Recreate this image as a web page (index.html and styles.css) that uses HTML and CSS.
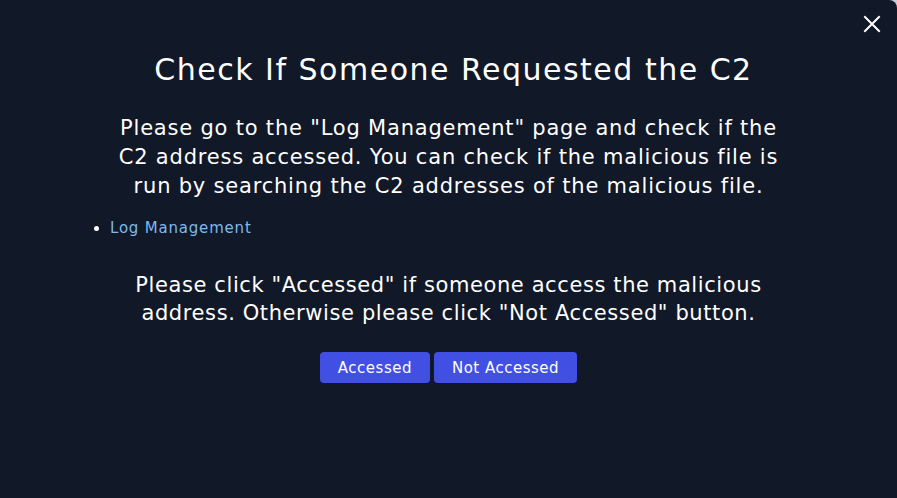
FILE: index.html
```html
<!DOCTYPE html>
<html>
<head>
<meta charset="utf-8">
<link rel="stylesheet" href="styles.css">
</head>
<body>
<div class="modal">
  <button class="close" aria-label="Close">
    <svg width="18" height="18" viewBox="0 0 18 18"><path d="M2 2 L16 16 M16 2 L2 16" stroke="#ffffff" stroke-width="2" stroke-linecap="square"/></svg>
  </button>
  <h1 class="title">Check If Someone Requested the C2</h1>
  <p class="lead">Please go to the "Log Management" page and check if the<br>C2 address accessed. You can check if the malicious file is<br>run by searching the C2 addresses of the malicious file.</p>
  <ul class="links">
    <li><a class="link" href="#">Log Management</a></li>
  </ul>
  <p class="prompt">Please click "Accessed" if someone access the malicious<br>address. Otherwise please click "Not Accessed" button.</p>
  <div class="actions">
    <button class="btn">Accessed</button>
    <button class="btn">Not Accessed</button>
  </div>
</div>
</body>
</html>
```

FILE: styles.css
```css
html, body {
  margin: 0;
  padding: 0;
  background: #c9ccd1;
  font-family: "DejaVu Sans", "Open Sans", sans-serif;
}
.modal {
  position: relative;
  box-sizing: border-box;
  width: 897px;
  height: 498px;
  background: #111827;
  border-top-right-radius: 8px;
  color: #ffffff;
  padding: 49px 40px 0;
  display: flex;
  flex-direction: column;
  align-items: center;
}
.close {
  position: absolute;
  top: 15px;
  right: 16px;
  background: none;
  border: 0;
  padding: 0;
  width: 18px;
  height: 18px;
  cursor: pointer;
}
.close svg { display: block; }
.title {
  margin: 0 0 0 10px;
  font-size: 30px;
  font-weight: 400;
  line-height: 42px;
  letter-spacing: 1.5px;
}
.lead {
  margin: 23px 0 0;
  text-align: center;
  font-size: 21px;
  line-height: 29px;
  letter-spacing: 0.8px;
  white-space: nowrap;
}
.links {
  align-self: stretch;
  margin: 16px 0 0;
  padding-left: 70px;
  font-size: 15px;
  line-height: 22px;
}
.link {
  color: #7db9ee;
  text-decoration: none;
  letter-spacing: 0.8px;
}
.prompt {
  margin: 32px 0 0;
  text-align: center;
  font-size: 21px;
  line-height: 28px;
  letter-spacing: 0.6px;
  white-space: nowrap;
}
.actions {
  margin-top: 25px;
  display: flex;
  gap: 4px;
}
.btn {
  height: 31px;
  padding: 0 18px;
  background: #4150e3;
  color: #ffffff;
  border: 0;
  border-radius: 4px;
  font-family: inherit;
  font-size: 15px;
  letter-spacing: 0.5px;
}
```
